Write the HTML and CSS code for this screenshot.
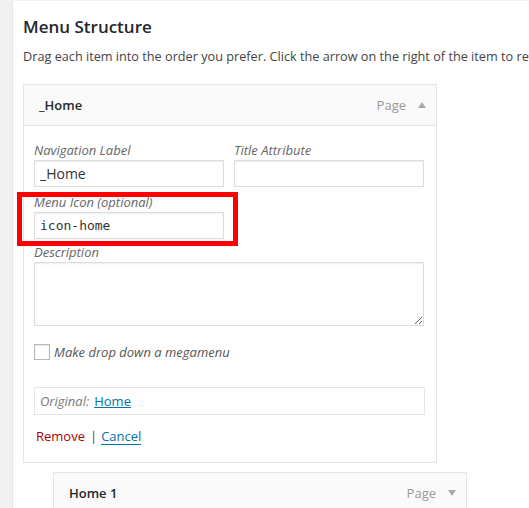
FILE: index.html
```html
<!DOCTYPE html>
<html>
<head>
<meta charset="utf-8">
<link rel="stylesheet" href="styles.css">
</head>
<body>
<div class="panel">
  <h3 class="title">Menu Structure</h3>
  <p class="intro">Drag each item into the order you prefer. Click the arrow on the right of the item to reveal additional configuration options.</p>

  <div class="item">
    <div class="item-head">
      <span class="item-title">_Home</span>
      <span class="item-type">Page</span>
      <span class="arrow up"></span>
    </div>
    <div class="settings">
      <div class="row">
        <div class="field">
          <label class="lbl">Navigation Label</label>
          <input class="inp" type="text" value="_Home">
        </div>
        <div class="field">
          <label class="lbl">Title Attribute</label>
          <input class="inp" type="text" value="">
        </div>
      </div>
      <div class="field field-icon">
        <label class="lbl">Menu Icon (optional)</label>
        <input class="inp mono" type="text" value="icon-home">
        <span class="highlight"></span>
      </div>
      <div class="field field-desc">
        <label class="lbl">Description</label>
        <textarea class="txt"></textarea>
      </div>
      <div class="check-row">
        <span class="box"></span>
        <span class="check-lbl">Make drop down a megamenu</span>
      </div>
      <div class="original">
        <span class="orig-lbl">Original:</span>
        <a class="link" href="#">Home</a>
      </div>
      <div class="actions">
        <a class="remove" href="#">Remove</a>
        <span class="sep">|</span>
        <a class="cancel" href="#">Cancel</a>
      </div>
    </div>
  </div>

  <div class="item sub">
    <div class="item-head">
      <span class="item-title">Home 1</span>
      <span class="item-type">Page</span>
      <span class="arrow down"></span>
    </div>
  </div>
</div>
</body>
</html>
```

FILE: styles.css
```css
html, body {
  margin: 0;
  padding: 0;
  background: #f1f1f1;
  overflow: hidden;
  font-family: "Open Sans", "Liberation Sans", sans-serif;
  font-size: 13px;
  color: #444;
}
body {
  padding-top: 1px;
}
.panel {
  margin-left: 12px;
  border-left: 1px solid #e5e5e5;
  background: #fff;
  padding: 14px 0 0 10px;
  min-height: 600px;
}
.title {
  margin: 0;
  font-size: 17px;
  line-height: 24px;
  font-weight: 600;
  color: #23282d;
}
.intro {
  margin: 7px 0 0;
  font-size: 12.7px;
  line-height: 20px;
  white-space: nowrap;
  color: #444;
}
.item {
  margin-top: 18px;
  width: 412px;
  border: 1px solid #e5e5e5;
  background: #fff;
}
.item.sub {
  margin-top: 9px;
  margin-left: 30px;
}
.item-head {
  display: flex;
  align-items: center;
  height: 40px;
  padding: 0 10px 0 15px;
  background: #fafafa;
  border-bottom: 1px solid #e5e5e5;
}
.item-title {
  flex: 1;
  font-weight: 600;
  color: #23282d;
  line-height: 20px;
}
.item-type {
  color: #999;
  line-height: 20px;
}
.arrow {
  width: 0;
  height: 0;
  margin-left: 12px;
  border-left: 4px solid transparent;
  border-right: 4px solid transparent;
}
.arrow.up {
  border-bottom: 6px solid #aaa;
}
.arrow.down {
  border-top: 6px solid #aaa;
}
.settings {
  padding: 14px 11px 16px 10px;
}
.row {
  display: flex;
  gap: 10px;
}
.field {
  display: flex;
  flex-direction: column;
  width: 190px;
}
.field-icon {
  position: relative;
  margin-top: 5px;
}
.field-desc {
  width: 390px;
  margin-top: 3px;
}
.lbl {
  font-style: italic;
  color: #666;
  line-height: 20px;
}
.inp {
  box-sizing: border-box;
  height: 27px;
  margin: 0;
  padding: 3px 5px;
  border: 1px solid #ddd;
  box-shadow: inset 0 1px 2px rgba(0,0,0,.07);
  font-family: "Open Sans", "Liberation Sans", sans-serif;
  font-size: 14px;
  color: #333;
  background: #fff;
  outline: none;
}
.inp.mono {
  font-family: "DejaVu Sans Mono", monospace;
  font-size: 13px;
}
.txt {
  box-sizing: border-box;
  height: 64px;
  width: 390px;
  margin: 0;
  border: 1px solid #ddd;
  box-shadow: inset 0 1px 2px rgba(0,0,0,.07);
  background: #fff;
}
.highlight {
  position: absolute;
  left: -17px;
  top: 0;
  width: 221px;
  height: 54px;
  box-sizing: border-box;
  border: 5px solid #f00;
}
.check-row {
  display: flex;
  align-items: center;
  gap: 4px;
  height: 20px;
  margin-top: 16px;
}
.box {
  box-sizing: border-box;
  width: 16px;
  height: 16px;
  border: 1px solid #b4b9be;
  box-shadow: inset 0 1px 2px rgba(0,0,0,.1);
  background: #fff;
}
.check-lbl {
  font-style: italic;
  color: #555;
}
.original {
  box-sizing: border-box;
  height: 28px;
  margin-top: 25px;
  padding: 0 0 0 5px;
  display: flex;
  align-items: center;
  border: 1px solid #e5e5e5;
}
.orig-lbl {
  font-style: italic;
  color: #777;
  margin-right: 5px;
}
.link {
  color: #0073aa;
  text-decoration: underline;
}
.actions {
  margin-top: 11px;
  line-height: 20px;
  padding-left: 2px;
  display: flex;
  align-items: baseline;
}
.remove {
  color: #a00;
  text-decoration: none;
}
.sep {
  margin: 0 4px 0 5px;
  color: #444;
}
.cancel {
  color: #0073aa;
  text-decoration: none;
  border-bottom: 1px solid #0073aa;
  line-height: 16px;
}
```
